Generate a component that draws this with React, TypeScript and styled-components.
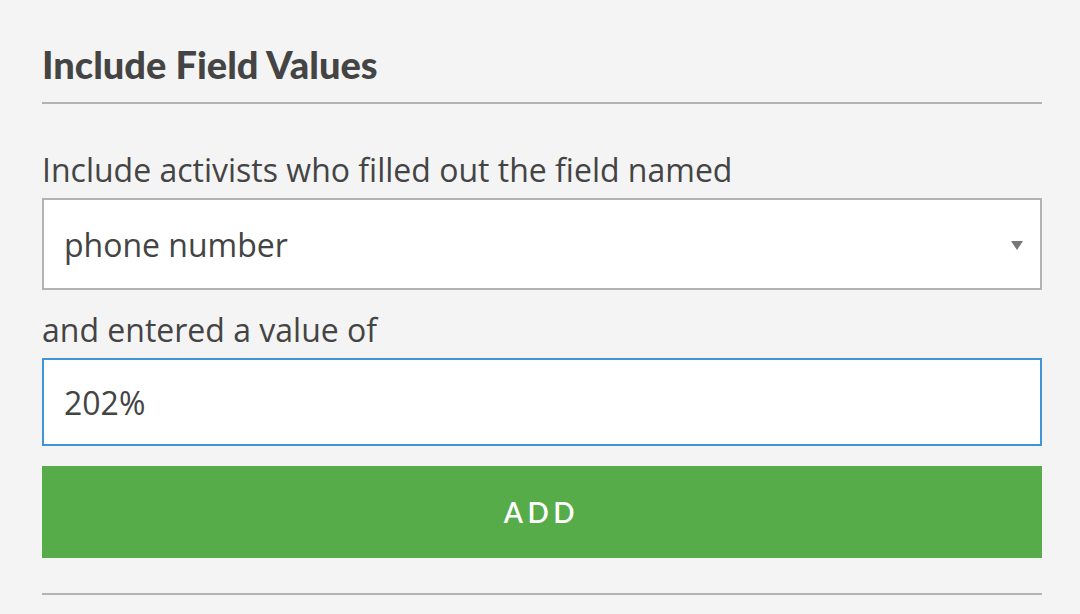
import styled, { createGlobalStyle } from "styled-components";

const GlobalStyle = createGlobalStyle`
  html, body {
    margin: 0;
    padding: 0;
    background-color: #f4f4f4;
  }
`;

const Panel = styled.div`
  display: flex;
  flex-direction: column;
  width: 1000px;
  padding: 42px 38px 0 42px;
  font-family: "Open Sans", "Liberation Sans", sans-serif;
  color: #444444;
`;

const Title = styled.h2`
  margin: 0;
  font-family: Lato, "Liberation Sans", sans-serif;
  font-weight: 900;
  font-size: 38px;
  line-height: 45px;
  color: #444444;
`;

const Rule = styled.hr<{ $gap: number }>`
  margin: ${(p) => p.$gap}px 0 0;
  border: none;
  height: 2px;
  background-color: #b3b3b3;
`;

const Label = styled.label<{ $gap: number }>`
  display: block;
  margin-top: ${(p) => p.$gap}px;
  font-size: 32px;
  line-height: 44px;
`;

const SelectWrapper = styled.div`
  position: relative;
  margin-top: 6px;
  height: 92px;
`;

const Select = styled.select`
  appearance: none;
  box-sizing: border-box;
  width: 100%;
  height: 100%;
  padding: 0 60px 0 20px;
  border: 2px solid #b3b3b3;
  border-radius: 0;
  background-color: #ffffff;
  font-family: "Open Sans", "Liberation Sans", sans-serif;
  font-size: 32px;
  color: #444444;
  outline: none;
`;

const Caret = styled.svg`
  position: absolute;
  right: 19px;
  top: 43px;
  pointer-events: none;
`;

const TextInput = styled.input`
  box-sizing: border-box;
  width: 100%;
  height: 88px;
  margin-top: 6px;
  padding: 0 20px;
  border: 2px solid #4194d8;
  border-radius: 0;
  background-color: #ffffff;
  font-family: "Open Sans", "Liberation Sans", sans-serif;
  font-size: 32px;
  color: #444444;
  outline: none;
`;

const AddButton = styled.button`
  display: flex;
  align-items: center;
  justify-content: center;
  height: 92px;
  margin-top: 20px;
  border: none;
  border-radius: 0;
  background-color: #57ac4a;
  color: #ffffff;
  font-family: Lato, "Liberation Sans", sans-serif;
  font-weight: 600;
  font-size: 28px;
  letter-spacing: 4.5px;
  padding-left: 5px;
  cursor: pointer;
`;

export default function App() {
  return (
    <>
      <GlobalStyle />
      <Panel>
        <Title>Include Field Values</Title>
        <Rule $gap={15} />

        <Label $gap={44}>Include activists who filled out the field named</Label>
        <SelectWrapper>
          <Select defaultValue="phone number">
            <option value="phone number">phone number</option>
          </Select>
          <Caret width="12" height="9" viewBox="0 0 12 9">
            <path d="M0 0 H12 L6 9 Z" fill="#777777" />
          </Caret>
        </SelectWrapper>

        <Label $gap={18}>and entered a value of</Label>
        <TextInput type="text" defaultValue="202%" />

        <AddButton type="button">ADD</AddButton>
        <Rule $gap={35} />
      </Panel>
    </>
  );
}
